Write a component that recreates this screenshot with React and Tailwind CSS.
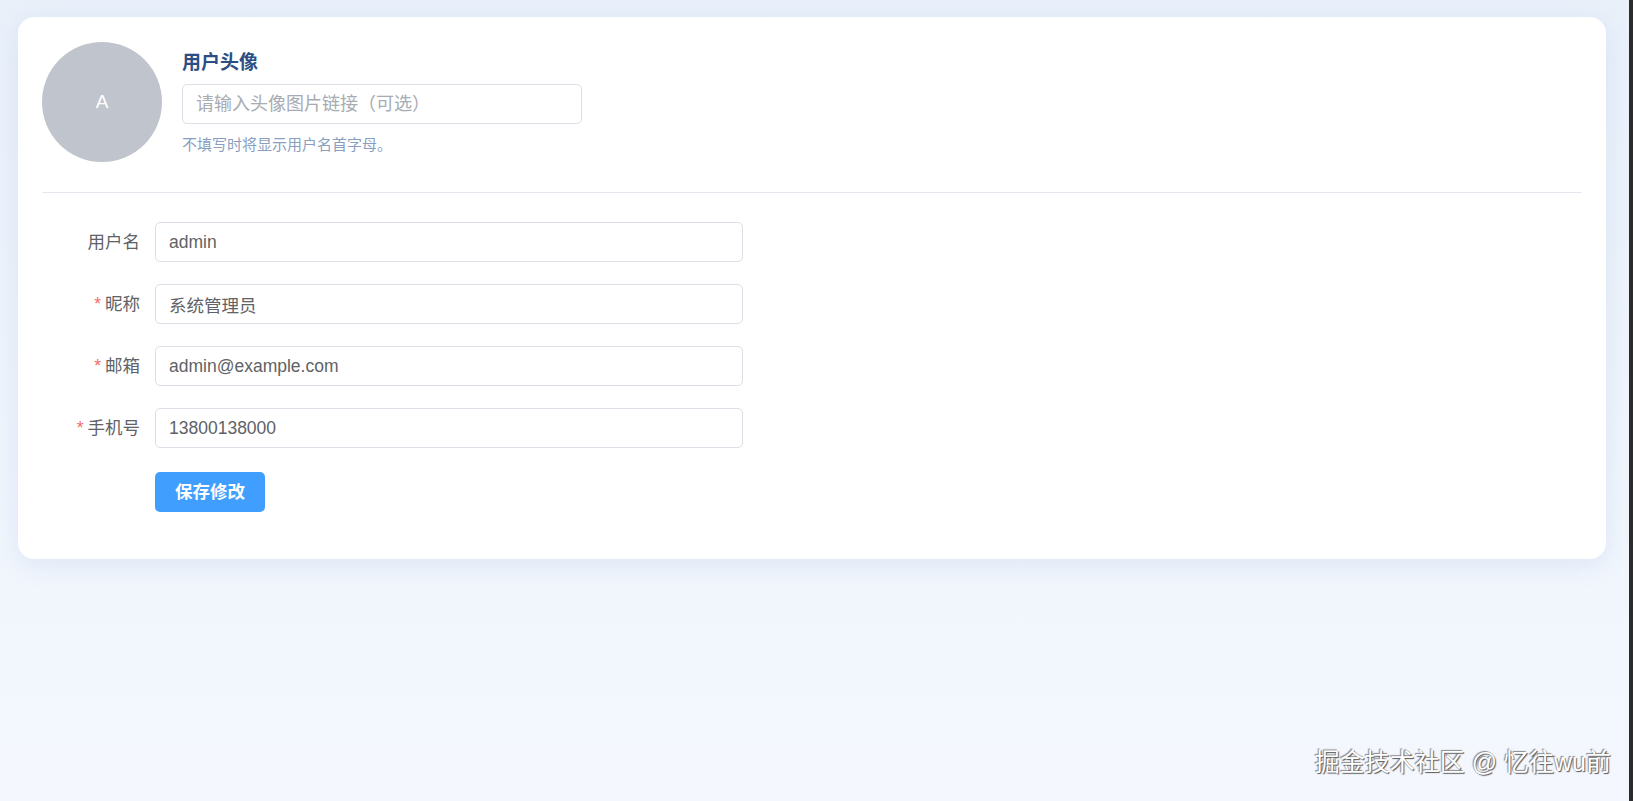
import React from "react";

const fields = [
  { label: "用户名", value: "admin", required: false },
  { label: "昵称", value: "系统管理员", required: true },
  { label: "邮箱", value: "admin@example.com", required: true },
  { label: "手机号", value: "13800138000", required: true },
];

export default function App() {
  return (
    <div
      className="flex h-[801px] w-full"
      style={{ fontFamily: '"Liberation Sans", "Noto Sans CJK SC", sans-serif' }}
    >
      <main className="relative flex-1 bg-gradient-to-b from-[#e9f0fa] to-[#f4f8fe] pt-[17px] pl-[18px] pr-[23px]">
        <section className="rounded-2xl bg-white p-6 shadow-[0_6px_24px_rgba(120,150,200,0.15)]">
          {/* avatar block */}
          <div className="flex items-start gap-5">
            <div className="mt-px flex h-[120px] w-[120px] shrink-0 items-center justify-center rounded-full bg-[#c0c4cc] text-[19px] text-white">
              A
            </div>
            <div className="flex flex-col pt-[10px]">
              <h3 className="text-[19px] font-bold leading-6 text-[#2b4f85]">用户头像</h3>
              <input
                className="mt-[9px] h-10 w-[400px] rounded-[5px] border border-[#dcdfe6] px-[13px] text-[18px] text-[#606266] outline-none placeholder:text-[#a8abb2]"
                placeholder="请输入头像图片链接（可选）"
              />
              <p className="mt-[11px] text-[15px] leading-5 text-[#8a9fc0]">不填写时将显示用户名首字母。</p>
            </div>
          </div>

          <div className="mt-[30px] h-px bg-[#e4e7ed]" />

          {/* form */}
          <div className="mt-[29px] flex flex-col gap-[22px] pb-[23px]">
            {fields.map((f) => (
              <div key={f.label} className="flex items-center">
                <label className="w-[113px] shrink-0 pr-[15px] text-right text-[17.5px] text-[#606266]">
                  {f.required && <span className="mr-1 text-[#f56c6c]">*</span>}
                  {f.label}
                </label>
                <input
                  className="h-10 w-[588px] rounded-[5px] border border-[#dcdfe6] px-[13px] text-[17.5px] text-[#606266] outline-none"
                  defaultValue={f.value}
                />
              </div>
            ))}
            <div className="mt-[2px] pl-[113px]">
              <button className="h-10 w-[110px] rounded-[5px] bg-[#409eff] text-[17.5px] font-bold text-white">
                保存修改
              </button>
            </div>
          </div>
        </section>

        <div className="absolute bottom-[20px] right-[18px] text-[25px] text-white [text-shadow:1px_1px_1px_#555,-1px_-1px_1px_#888]">
          掘金技术社区 @ 忆往wu前
        </div>
      </main>
      <div className="w-1 bg-[#2b2b2b]" />
    </div>
  );
}
